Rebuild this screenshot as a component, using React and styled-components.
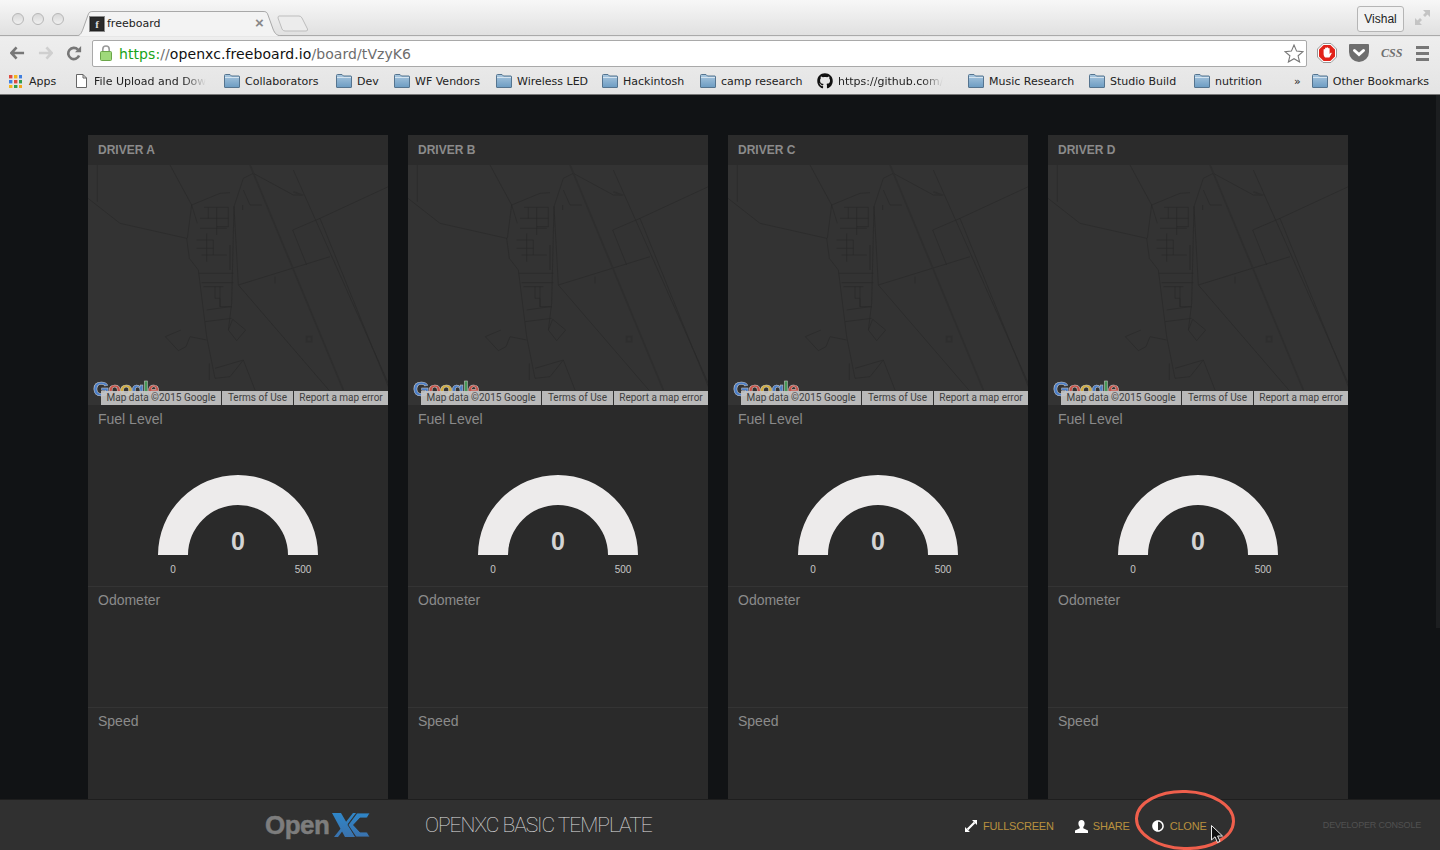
import React from "react";
import styled, { createGlobalStyle } from "styled-components";
import { FaGithub, FaAdjust } from "react-icons/fa";

const GlobalStyle = createGlobalStyle`
  html, body {
    margin: 0;
    height: 100%;
    overflow: hidden;
    background: #111315;
  }
`;

const leftFolders = [
  { label: "Collaborators", width: 112 },
  { label: "Dev", width: 58 },
  { label: "WF Vendors", width: 102 },
  { label: "Wireless LED", width: 106 },
  { label: "Hackintosh", width: 98 },
  { label: "camp research", width: 117 },
];

const rightFolders = [
  { label: "Music Research", width: 121 },
  { label: "Studio Build", width: 105 },
  { label: "nutrition", width: 70 },
];

const drivers = ["DRIVER A", "DRIVER B", "DRIVER C", "DRIVER D"];

const Folder = () => (
  <svg width="16" height="14" viewBox="0 0 16 14">
    <defs>
      <linearGradient id="folderFill" x1="0" y1="0" x2="0" y2="1">
        <stop offset="0" stopColor="#a9c7df" />
        <stop offset="1" stopColor="#6d9cc2" />
      </linearGradient>
    </defs>
    <path d="M.5 13V1.5Q.5.5 1.5.5H6L7.5 2H15Q15.5 2 15.5 3V13Q15.5 13.5 15 13.5H1Q.5 13.5.5 13Z" fill="url(#folderFill)" stroke="#55748f" />
    <path d="M1 3.5H15" stroke="#d4e3ef" />
  </svg>
);

const AppsIcon = () => (
  <svg width="13" height="13" viewBox="0 0 13 13">
    {["#e04a3f", "#f3b51e", "#3f7fe0", "#3f7fe0", "#e04a3f", "#2f9e4f", "#f3b51e", "#2f9e4f", "#f3a51e"].map((c, i) => (
      <rect key={i} x={(i % 3) * 5} y={Math.floor(i / 3) * 5} width="3.4" height="3.4" fill={c} />
    ))}
  </svg>
);

const FileIcon = () => (
  <svg width="11" height="14" viewBox="0 0 11 14">
    <path d="M.5.5H7L10.5 4V13.5H.5Z M7 .5V4H10.5" fill="#fff" stroke="#666" />
  </svg>
);

const Back = ({ $light }) => (
  <svg width="15" height="14" viewBox="0 0 16 14">
    <path d="M7 1 1.5 7 7 13M2 7H15" fill="none" stroke={$light ? "#cfcfcf" : "#777"} strokeWidth="2.8" />
  </svg>
);

const Reload = () => (
  <svg width="16" height="15" viewBox="0 0 15 15">
    <path d="M12.6 9.5A5.6 5.6 0 1 1 11.4 3.6" fill="none" stroke="#777" strokeWidth="2.6" />
    <path d="M8.5 6.2H14.6V0Z" fill="#777" />
  </svg>
);

const Lock = () => (
  <svg width="12" height="16" viewBox="0 0 12 16">
    <path d="M2.8 7V4.2a3.2 3.2 0 0 1 6.4 0V7" fill="none" stroke="#9a9a9a" strokeWidth="1.6" />
    <rect x=".5" y="6.5" width="11" height="9" rx="1" fill="#9fd97b" stroke="#6ba64a" />
  </svg>
);

const Star = () => (
  <svg width="20" height="19" viewBox="0 0 20 19">
    <path d="M10 1 12.6 7.1 19 7.6 14.1 11.8 15.6 18 10 14.7 4.4 18 5.9 11.8 1 7.6 7.4 7.1Z" fill="#fff" stroke="#777" strokeWidth="1.1" />
  </svg>
);

const AdBlock = () => (
  <svg width="20" height="20" viewBox="0 0 20 20">
    <path d="M6 .5H14L19.5 6V14L14 19.5H6L.5 14V6Z" fill="#fff" stroke="#999" />
    <path d="M6.6 2H13.4L18 6.6V13.4L13.4 18H6.6L2 13.4V6.6Z" fill="#e2231a" />
    <path d="M6.6 9V6.4a.8.8 0 0 1 1.5 0V5a.8.8 0 0 1 1.5 0V4.8a.8.8 0 0 1 1.5 0V5.6a.8.8 0 0 1 1.5 0V11l1-1.2c.8-.5 1.4.2 1 .8L12.4 14.6H8.2C7 13.6 6.6 12 6.6 11Z" fill="#fff" />
  </svg>
);

const Pocket = () => (
  <svg width="20" height="18" viewBox="0 0 20 18">
    <path d="M1 0H19Q20 0 20 1V8A10 10 0 0 1 0 8V1Q0 0 1 0Z" fill="#6e6e6e" />
    <path d="M5.5 6.5 10 10.5 14.5 6.5" fill="none" stroke="#fff" strokeWidth="3" strokeLinecap="round" />
  </svg>
);

const ResizeIcon = () => (
  <svg width="15" height="15" viewBox="0 0 15 15">
    <path d="M8 0H15V7L12.5 4.5 10 7 8 5 10.5 2.5Z M0 8 2.5 10.5 5 8 7 10 4.5 12.5 7 15H0Z" fill="#c4c4c4" />
  </svg>
);

const FullscreenIcon = () => (
  <svg width="12" height="12" viewBox="0 0 12 12">
    <path d="M7 0H12V5ZM0 7V12H5Z" fill="#fff" />
    <path d="M2.5 9.5 9.5 2.5" stroke="#fff" strokeWidth="2.2" />
  </svg>
);

const UserIcon = () => (
  <svg width="13" height="13" viewBox="0 0 13 13">
    <path d="M6.5 0C8.5 0 9.6 1.5 9.6 3.5 9.6 5 9 6.2 8.3 7V8.3L13 10.5V13H0V10.5L4.7 8.3V7C4 6.200 3.4 5 3.4 3.5 3.4 1.5 4.5 0 6.5 0Z" fill="#fff" />
  </svg>
);

const XcMark = () => (
  <svg width="39" height="24" viewBox="0 0 39 24">
    <defs>
      <linearGradient id="xcFill" x1="0" y1="0" x2="0" y2="1">
        <stop offset="0" stopColor="#2f86c8" />
        <stop offset="1" stopColor="#3a72ad" />
      </linearGradient>
    </defs>
    <path d="M22 0H25L7 24H3Z" fill="url(#xcFill)" />
    <path d="M1 0H10L24 24H14Z" fill="url(#xcFill)" />
    <path d="M26 0H39L36 5H29L22.5 12 29 19H36L39 24H25L17 12Z" fill="url(#xcFill)" stroke="#303030" strokeWidth="0.8" />
  </svg>
);

const MapLines = () => (
  <MapSvg viewBox="24 105 900 720" preserveAspectRatio="none">
    <g fill="none" stroke="#292929" strokeWidth="2">
      <path d="M52 105V215M24 205 120 280 320 325 328 385 355 420 380 620 405 745 450 740 490 690 525 780" />
      <path d="M270 105 335 225 322 325M335 225 352 280M335 225 420 190 450 188" />
      <path d="M462 230 490 145 520 130 640 195 670 195" />
      <path d="M640 120 925 760M638 300 720 265 925 170M720 265 925 770M638 300 680 405M475 465 750 380" />
      <path d="M462 230 475 465 755 790M462 230 455 520 445 600 470 632 497 600 458 568 445 600" />
      <path d="M380 630 330 620 318 650 295 662 256 620 303 600M375 575 455 565M405 715 490 690 M388 700V750" />
      <path d="M490 180 510 225H545M488 225V240M585 440V460" />
      <path d="M372 232H445V290H410V315M385 232V265M410 232V290M360 265H445M360 295H440M350 330H400V375M350 355H400M380 310V395M365 375H440M355 430H460M365 458H460M370 470H430M405 470V505H420V530M420 470V530H455M380 540 450 530" />
      <path d="M510 105 790 780" strokeWidth="5" stroke="#2e2e2e" />
      <path d="M450 345V420M640 185 665 195M680 620H695V635H680Z" strokeWidth="5" stroke="#2e2e2e" />
    </g>
  </MapSvg>
);

const Gauge = () => (
  <GaugeSvg width="160" height="106" viewBox="0 0 160 106">
    <path d="M0 80A80 80 0 0 1 160 80H130A50 50 0 0 0 30 80Z" fill="#edebeb" />
    <GaugeValue x="80" y="75" textAnchor="middle">0</GaugeValue>
    <GaugeLabel x="15" y="98" textAnchor="middle">0</GaugeLabel>
    <GaugeLabel x="145" y="98" textAnchor="middle">500</GaugeLabel>
  </GaugeSvg>
);

const Pane = ({ title }) => (
  <Card>
    <CardHeader>{title}</CardHeader>
    <MapBox>
      <MapLines />
      <GoogleLogo>
        <LogoLetter $color="#4d86d8">G</LogoLetter>
        <LogoLetter $color="#d9564a">o</LogoLetter>
        <LogoLetter $color="#e3b93c">o</LogoLetter>
        <LogoLetter $color="#4d86d8">g</LogoLetter>
        <LogoLetter $color="#4aa35c">l</LogoLetter>
        <LogoLetter $color="#d9564a">e</LogoLetter>
      </GoogleLogo>
      <MapAttribution>
        <MapCredit $width={120}>Map data ©2015 Google</MapCredit>
        <MapCredit $width={71}>Terms of Use</MapCredit>
        <MapCredit $width={94}>Report a map error</MapCredit>
      </MapAttribution>
    </MapBox>
    <Widget $height={182} $top={5}>
      <WidgetTitle>Fuel Level</WidgetTitle>
      <Gauge />
    </Widget>
    <Widget $height={121} $top={4}>
      <WidgetTitle>Odometer</WidgetTitle>
    </Widget>
    <Widget $height={121} $top={4}>
      <WidgetTitle>Speed</WidgetTitle>
    </Widget>
  </Card>
);

export default function App() {
  return (
    <Page>
      <GlobalStyle />
      <Chrome>
        <TitleBar>
          <Lights>
            <Light />
            <Light />
            <Light />
          </Lights>
          <Tab>
            <TabShape viewBox="0 0 208 25" preserveAspectRatio="none">
              <path d="M0 25C5 25 6 23 8 18L13 4C14 1 15 .5 18 .5H188C191 .5 192 1 193 4L198 18C200 23 202 25 208 25" fill="#f3f3f3" stroke="#a8a8a8" />
            </TabShape>
            <Favicon>f</Favicon>
            <TabTitle>freeboard</TabTitle>
            <TabClose>×</TabClose>
          </Tab>
          <NewTab viewBox="0 0 32 17" width="32" height="17">
            <path d="M2 1H22Q24 1 25 3L30.5 14Q31 16 29 16H8Q6 16 5 14L1 3Q1 1 2 1Z" fill="#ececec" stroke="#bdbdbd" />
          </NewTab>
          <Spacer />
          <UserBadge>Vishal</UserBadge>
          <ResizeSlot>
            <ResizeIcon />
          </ResizeSlot>
        </TitleBar>
        <Toolbar>
          <NavIcons>
            <Back />
            <Forward><Back $light /></Forward>
            <Reload />
          </NavIcons>
          <UrlBox>
            <Lock />
            <Url>
              <Https>https:</Https>
              <UrlRest>//</UrlRest>
              <UrlHost>openxc.freeboard.io</UrlHost>
              <UrlRest>/board/tVzyK6</UrlRest>
            </Url>
            <Spacer />
            <Star />
          </UrlBox>
          <Extensions>
            <AdBlock />
            <Pocket />
            <CssBadge>CSS</CssBadge>
            <Burger>
              <i />
              <i />
              <i />
            </Burger>
          </Extensions>
        </Toolbar>
        <BookmarkBar>
          <Bookmark $width={67} $gap={7}>
            <AppsIcon />
            Apps
          </Bookmark>
          <Bookmark $width={148} $gap={7}>
            <FileIcon />
            <Faded>File Upload and Dow</Faded>
          </Bookmark>
          {leftFolders.map((b) => (
            <Bookmark key={b.label} $width={b.width} $gap={5}>
              <Folder />
              {b.label}
            </Bookmark>
          ))}
          <Bookmark $width={151} $gap={5}>
            <FaGithub size={16} color="#111" />
            <Faded>https://github.com/</Faded>
          </Bookmark>
          {rightFolders.map((b) => (
            <Bookmark key={b.label} $width={b.width} $gap={5}>
              <Folder />
              {b.label}
            </Bookmark>
          ))}
          <Spacer />
          <Chevrons>»</Chevrons>
          <Bookmark $gap={5}>
            <Folder />
            Other Bookmarks
          </Bookmark>
        </BookmarkBar>
      </Chrome>
      <Board>
        {drivers.map((d) => (
          <Pane key={d} title={d} />
        ))}
        <ScrollThumb />
      </Board>
      <Footer>
        <Logo>
          <LogoText>Open</LogoText>
          <XcMark />
        </Logo>
        <BoardTitle>OPENXC BASIC TEMPLATE</BoardTitle>
        <Actions>
          <Action $iconGap={6} $after={21}>
            <FullscreenIcon />
            FULLSCREEN
          </Action>
          <Action $iconGap={5} $after={22}>
            <UserIcon />
            SHARE
          </Action>
          <Action $iconGap={6} $after={0}>
            <FaAdjust size={12} color="#fff" />
            CLONE
          </Action>
        </Actions>
        <ConsoleLink>DEVELOPER CONSOLE</ConsoleLink>
        <Callout viewBox="0 0 104 64" width="104" height="64">
          <ellipse cx="52" cy="32" rx="48.5" ry="28.5" fill="none" stroke="#ef5f4c" strokeWidth="3" transform="rotate(2 52 32)" />
        </Callout>
        <Cursor viewBox="0 0 12 18" width="12" height="18">
          <path d="M.5.5V15L4 11.8 6.5 17.5 9 16.3 6.6 11H11.5Z" fill="#111" stroke="#eee" strokeWidth="1" />
        </Cursor>
      </Footer>
    </Page>
  );
}

const Page = styled.div`
  width: 1440px;
  height: 850px;
  display: flex;
  flex-direction: column;
  overflow: hidden;
  background: #111315;
`;

const Chrome = styled.header`
  height: 95px;
  flex: none;
  display: flex;
  flex-direction: column;
  background: linear-gradient(#f7f7f7 0, #e0e0e0 36px, #eeeeee 37px, #e4e4e4 95px);
  border-bottom: 1px solid #777;
  box-sizing: border-box;
  font-family: "DejaVu Sans", sans-serif;
  color: #222;
`;

const TitleBar = styled.div`
  height: 36px;
  flex: none;
  box-sizing: border-box;
  display: flex;
  align-items: flex-end;
  padding: 0 10px 0 12px;
  border-bottom: 1px solid #aaa;
`;

const Lights = styled.div`
  display: flex;
  gap: 8px;
  align-self: center;
  margin-top: 2px;
  margin-right: 12px;
  width: 52px;
`;

const Light = styled.span`
  width: 10px;
  height: 10px;
  flex: none;
  border-radius: 50%;
  border: 1px solid #b6b6b6;
  background: linear-gradient(#d8d8d8, #f0f0f0);
`;

const Tab = styled.div`
  position: relative;
  width: 208px;
  height: 25px;
  margin-left: -1px;
  margin-bottom: -1px;
  display: flex;
  align-items: center;
  padding-left: 14px;
  box-sizing: border-box;
`;

const TabShape = styled.svg`
  position: absolute;
  inset: 0;
  width: 100%;
  height: 100%;
`;

const Favicon = styled.span`
  position: relative;
  width: 16px;
  height: 16px;
  box-sizing: border-box;
  border: 2px solid #222;
  outline: 1px solid #8a8a8a;
  outline-offset: -1px;
  background: #2a2a2a;
  color: #ddd;
  font: bold 11px/12px "Liberation Serif", serif;
  text-align: center;
`;

const TabTitle = styled.span`
  position: relative;
  margin-left: 2px;
  font-size: 11px;
  color: #222;
`;

const TabClose = styled.span`
  position: absolute;
  left: 180px;
  top: 3px;
  font: bold 15px/18px "Liberation Sans", sans-serif;
  color: #888;
`;

const NewTab = styled.svg`
  margin-left: -6px;
  margin-bottom: 3px;
`;

const Spacer = styled.div`
  flex: 1;
`;

const UserBadge = styled.div`
  width: 47px;
  height: 26px;
  box-sizing: border-box;
  align-self: center;
  margin-top: 2px;
  margin-right: 11px;
  border: 1px solid #b5b5b5;
  border-radius: 3px;
  font: 12px/25px "Liberation Sans", sans-serif;
  text-align: center;
  color: #222;
  background: #f2f2f2;
`;

const ResizeSlot = styled.div`
  display: flex;
  align-self: center;
`;

const Toolbar = styled.div`
  height: 32px;
  flex: none;
  box-sizing: border-box;
  display: flex;
  align-items: center;
  padding: 2px 0 0 10px;
`;

const NavIcons = styled.div`
  display: flex;
  align-items: center;
  gap: 13px;
  width: 82px;
`;

const Forward = styled.span`
  display: flex;
  transform: scaleX(-1);
`;

const UrlBox = styled.div`
  width: 1215px;
  height: 27px;
  box-sizing: border-box;
  display: flex;
  align-items: center;
  padding: 0 2px 0 7px;
  background: #fff;
  border: 1px solid #a9a9a9;
  border-radius: 2px;
`;

const Url = styled.div`
  margin-left: 7px;
  padding-top: 1px;
  font-size: 14px;
  letter-spacing: 0.08px;
  white-space: nowrap;
`;

const Https = styled.span`
  color: #18a418;
`;

const UrlRest = styled.span`
  color: #6d6d6d;
`;

const UrlHost = styled.span`
  color: #111;
`;

const Extensions = styled.div`
  flex: 1;
  display: flex;
  align-items: center;
  gap: 12px;
  padding-left: 10px;
`;

const CssBadge = styled.span`
  width: 20px;
  text-align: center;
  font: italic bold 12px "Liberation Serif", serif;
  color: #6f6f6f;
`;

const Burger = styled.div`
  display: flex;
  flex-direction: column;
  gap: 3px;
  margin-left: 3px;

  i {
    display: block;
    width: 13px;
    height: 3px;
    background: #777;
  }
`;

const BookmarkBar = styled.div`
  flex: 1;
  display: flex;
  align-items: center;
  padding: 0 11px 0 9px;
  font-size: 11px;
  color: #222;
`;

const Bookmark = styled.div`
  display: flex;
  align-items: center;
  gap: ${(p) => p.$gap}px;
  white-space: nowrap;
  flex: none;
  width: ${(p) => (p.$width ? `${p.$width}px` : "auto")};
`;

const Faded = styled.span`
  display: block;
  -webkit-mask-image: linear-gradient(to right, #000 80%, transparent);
  mask-image: linear-gradient(to right, #000 80%, transparent);
`;

const Chevrons = styled.span`
  margin-right: 11px;
`;

const Board = styled.main`
  position: relative;
  flex: 1;
  min-height: 0;
  display: flex;
  gap: 20px;
  padding: 40px 0 0 88px;
  overflow: hidden;
  background: #111315;
`;

const ScrollThumb = styled.div`
  position: absolute;
  top: 0;
  right: 0;
  width: 4px;
  height: 533px;
  background: #1c1e20;
`;

const Card = styled.section`
  width: 300px;
  flex: none;
  display: flex;
  flex-direction: column;
  background: #2a2a2a;
  font-family: "Liberation Sans", sans-serif;
`;

const CardHeader = styled.h2`
  height: 30px;
  flex: none;
  margin: 0;
  padding: 0 10px;
  font-size: 12px;
  line-height: 31px;
  font-weight: bold;
  color: #8b8b8b;
  background: #2b2b2b;
`;

const MapBox = styled.div`
  position: relative;
  height: 240px;
  flex: none;
  background: #333333;
`;

const MapSvg = styled.svg`
  display: block;
  width: 100%;
  height: 100%;
`;

const GoogleLogo = styled.div`
  position: absolute;
  left: 5px;
  top: 211px;
  font: bold 21px/26px "Liberation Sans", sans-serif;
  letter-spacing: -1.2px;
  -webkit-text-stroke: 0.5px #ddd;
  opacity: 0.9;
`;

const LogoLetter = styled.span`
  color: ${(p) => p.$color};
`;

const MapAttribution = styled.div`
  position: absolute;
  right: 0;
  bottom: 0;
  height: 14px;
  display: flex;
  gap: 1px;
`;

const MapCredit = styled.span`
  width: ${(p) => p.$width}px;
  background: rgba(200, 200, 200, 0.9);
  color: #3e3e3e;
  font: 10px/14px Roboto, sans-serif;
  text-align: center;
  white-space: nowrap;
`;

const Widget = styled.div`
  height: ${(p) => p.$height}px;
  flex: none;
  box-sizing: border-box;
  padding-top: ${(p) => p.$top}px;
  border-bottom: 1px solid #343434;
`;

const WidgetTitle = styled.h3`
  margin: 0;
  padding: 0 10px;
  font-size: 14px;
  line-height: 18px;
  font-weight: normal;
  color: #8b8b8b;
`;

const GaugeSvg = styled.svg`
  display: block;
  margin: 47px auto 0;
`;

const GaugeValue = styled.text`
  font: bold 25px "Liberation Sans", sans-serif;
  fill: #d4d4d4;
`;

const GaugeLabel = styled.text`
  font: 10px "Liberation Sans", sans-serif;
  fill: #c6c6c6;
`;

const Footer = styled.footer`
  position: relative;
  height: 51px;
  flex: none;
  box-sizing: border-box;
  display: flex;
  align-items: center;
  padding-left: 265px;
  background: #303030;
  border-top: 1px solid #1e1e1e;
  font-family: "Liberation Sans", sans-serif;
`;

const Logo = styled.div`
  display: flex;
  align-items: center;
  gap: 2px;
  width: 160px;
`;

const LogoText = styled.span`
  font: bold 26px/32px "Liberation Sans", sans-serif;
  letter-spacing: -0.5px;
  -webkit-text-stroke: 0.5px #7d7d7d;
  color: #7d7d7d;
`;

const BoardTitle = styled.div`
  width: 228px;
  font: 100 21px/26px Roboto, sans-serif;
  letter-spacing: -1px;
  color: #e2e2e2;
  white-space: nowrap;
`;

const Actions = styled.div`
  display: flex;
  align-items: center;
  margin-left: 312px;
  margin-top: 2px;
`;

const Action = styled.div`
  display: flex;
  align-items: center;
  gap: ${(p) => p.$iconGap}px;
  margin-right: ${(p) => p.$after}px;
  font-size: 11px;
  letter-spacing: -0.2px;
  color: #b8913f;
`;

const ConsoleLink = styled.div`
  position: absolute;
  right: 19px;
  top: 20px;
  font-size: 9px;
  letter-spacing: -0.2px;
  color: #505050;
`;

const Callout = styled.svg`
  position: absolute;
  left: 1133px;
  top: -12px;
  overflow: visible;
`;

const Cursor = styled.svg`
  position: absolute;
  left: 1211px;
  top: 25px;
`;
